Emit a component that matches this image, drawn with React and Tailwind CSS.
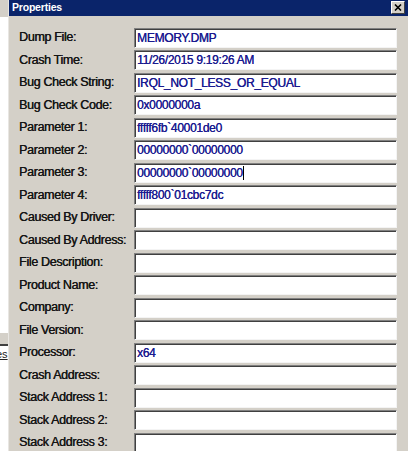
import React from 'react'

const rows = [
  { label: 'Dump File:', value: 'MEMORY.DMP' },
  { label: 'Crash Time:', value: '11/26/2015 9:19:26 AM' },
  { label: 'Bug Check String:', value: 'IRQL_NOT_LESS_OR_EQUAL' },
  { label: 'Bug Check Code:', value: '0x0000000a' },
  { label: 'Parameter 1:', value: 'fffff6fb`40001de0' },
  { label: 'Parameter 2:', value: '00000000`00000000' },
  { label: 'Parameter 3:', value: '00000000`00000000', caret: true },
  { label: 'Parameter 4:', value: 'fffff800`01cbc7dc' },
  { label: 'Caused By Driver:', value: '' },
  { label: 'Caused By Address:', value: '' },
  { label: 'File Description:', value: '' },
  { label: 'Product Name:', value: '' },
  { label: 'Company:', value: '' },
  { label: 'File Version:', value: '' },
  { label: 'Processor:', value: 'x64' },
  { label: 'Crash Address:', value: '' },
  { label: 'Stack Address 1:', value: '' },
  { label: 'Stack Address 2:', value: '' },
  { label: 'Stack Address 3:', value: '' },
]

const Field = ({ label, value, caret }) => (
  <div className="flex items-center h-[20px]">
    <div className="w-[125px] pl-[10px] text-[12.5px] tracking-[-0.35px] text-[#151515] whitespace-nowrap [text-shadow:0.35px_0_0_#151515]">{label}</div>
    <div className="flex-1 h-[20px] flex items-center bg-white border border-t-[#808080] border-l-[#808080] border-b-[#f4f4f4] border-r-[#f4f4f4] shadow-[inset_1px_1px_0_#404040] pl-[2px] text-[12px] tracking-[-0.3px] text-[#1a1a90] whitespace-nowrap overflow-hidden [text-shadow:0.3px_0_0_#1a1a90]">
      <span>{value}</span>
      {caret && <span className="inline-block w-px h-[14px] bg-black" />}
    </div>
  </div>
)

const App = () => {
  return (
    <div className="w-[408px] h-[451px] overflow-hidden flex bg-white" style={{ fontFamily: '"Liberation Sans", Arial, sans-serif' }}>
      {/* window behind the dialog */}
      <div className="w-[8px] flex flex-col shrink-0">
        <div className="h-[17px] bg-[#d4d0c8]" />
        <div className="h-[316px] bg-white" />
        <div className="h-[11px] bg-[#d4d0c8]" />
        <div className="h-[2px] bg-[#404040]" />
        <div className="h-[16px] bg-white flex items-center overflow-hidden">
          <span className="text-[11px] text-[#222] -ml-[4px] underline">es</span>
        </div>
        <div className="flex-1 bg-white" />
      </div>

      {/* dialog */}
      <div className="flex-1 flex flex-col bg-[#d4d0c8] border-l border-[#e8e6e2]">
        <div className="h-[18px] bg-[#0a246a] flex items-center justify-between pl-[3px] pr-[3px]">
          <span className="text-white font-bold text-[10.5px] tracking-[-0.2px]">Properties</span>
          <div className="w-[14px] h-[13px] bg-[#d4d0c8] border border-t-white border-l-white border-b-[#404040] border-r-[#404040] flex items-center justify-center">
            <svg width="8" height="7" viewBox="0 0 8 7">
              <path d="M1 0.5 L7 6.5 M7 0.5 L1 6.5" stroke="#000" strokeWidth="1.6" />
            </svg>
          </div>
        </div>
        <div className="flex flex-col gap-[2.5px] pt-[12px] pr-[11px]">
          {rows.map((r) => (
            <Field key={r.label} {...r} />
          ))}
        </div>
      </div>
    </div>
  )
}

export default App
